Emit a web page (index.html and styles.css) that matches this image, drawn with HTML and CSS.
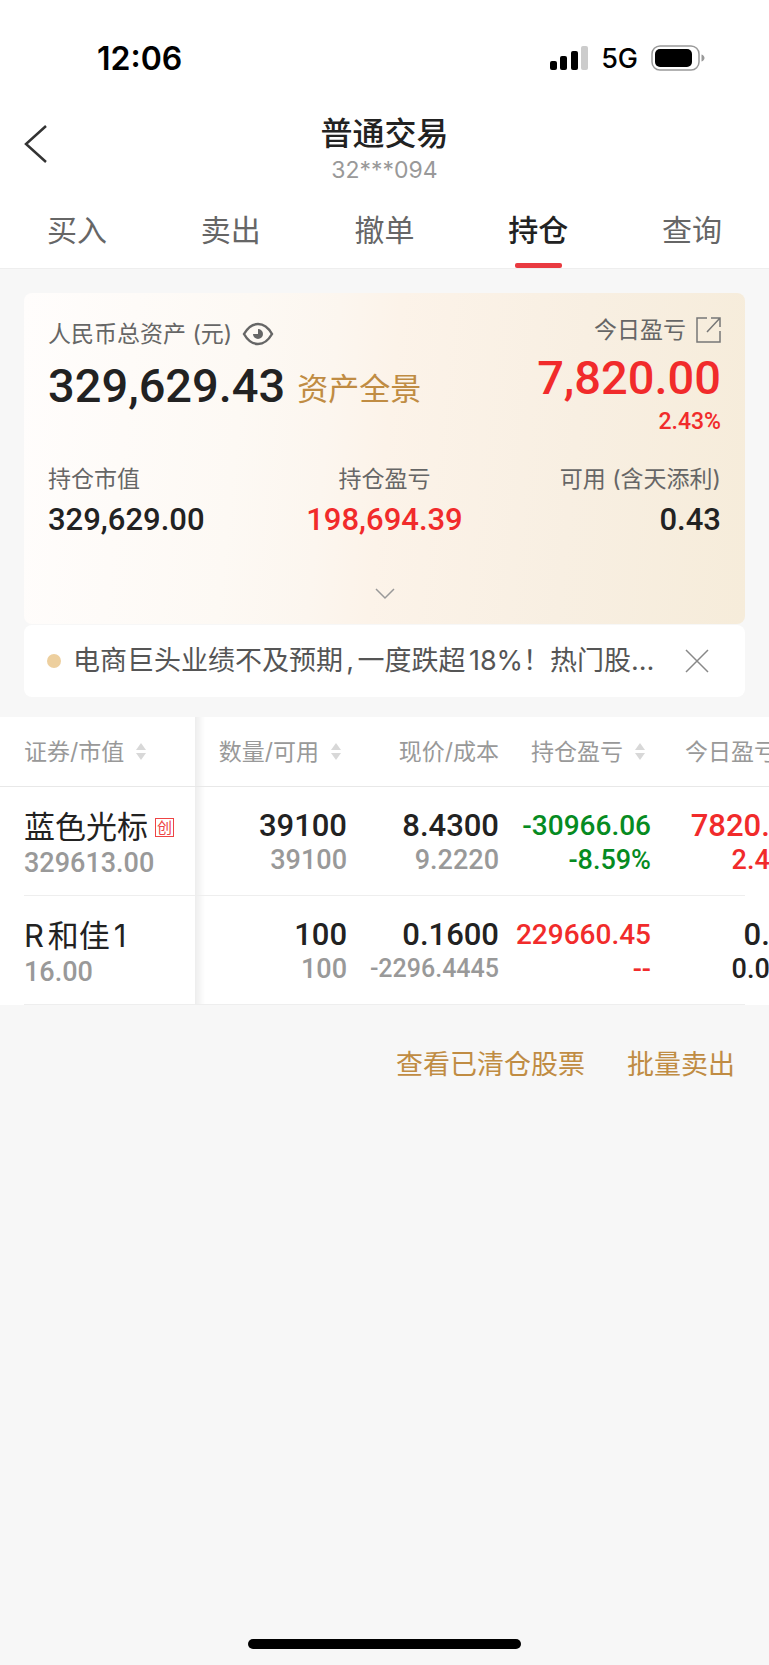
FILE: index.html
```html
<!DOCTYPE html>
<html lang="zh-CN">
<head>
    <meta charset="UTF-8">
    <meta name="viewport" content="width=device-width, initial-scale=1">
    <title>普通交易 - 持仓</title>
    <link rel="stylesheet" href="styles.css">
</head>
<body>
    <header class="header">
        <div class="status-bar">
            <span class="time">12:06</span>
            <div class="status-icons">
                <svg class="signal" width="38" height="24" viewBox="0 0 38 24">
                    <rect x="0" y="15" width="7" height="9" rx="2"/>
                    <rect x="10" y="10" width="7" height="14" rx="2"/>
                    <rect x="21" y="5" width="7" height="19" rx="2"/>
                    <rect x="31" y="0" width="7" height="24" rx="2" fill="#ccc"/>
                </svg>
                <span class="network">5G</span>
                <svg class="battery" width="54" height="26" viewBox="0 0 54 26">
                    <rect x="1" y="1" width="47" height="24" rx="8" fill="none" stroke="#999" stroke-width="1.5"/>
                    <rect x="4" y="4" width="37" height="18" rx="5"/>
                    <path d="M50.5 9.5c2 .6 3 2 3 3.500s-1 2.900-3 3.500z" fill="#999"/>
                </svg>
            </div>
        </div>

        <div class="title-bar">
            <button type="button" class="back" aria-label="返回">
                <svg width="24" height="40" viewBox="0 0 24 40">
                    <path d="M22 2L2 20l20 18" fill="none" stroke="#333" stroke-width="2.5"/>
                </svg>
            </button>
            <h1>普通交易</h1>
            <p class="account">32***094</p>
        </div>

        <nav class="tabs">
            <a href="#buy">买入</a>
            <a href="#sell">卖出</a>
            <a href="#cancel">撤单</a>
            <a href="#position" class="active">持仓</a>
            <a href="#query">查询</a>
        </nav>
    </header>

    <main>
        <section class="asset-card">
            <div class="asset-top">
                <div class="asset-total">
                    <div class="label">
                        <span>人民币总资产 (元)</span>
                        <button type="button" class="eye" aria-label="隐藏金额">
                            <svg width="32" height="24" viewBox="0 0 32 24">
                                <path d="M2 12C6 5 11 2 16 2s10 3 14 10c-4 7-9 10-14 10S6 19 2 12z" fill="none" stroke="#666" stroke-width="2.5"/>
                                <path d="M16 7a5 5 0 1 1-5 5h5z" fill="#666"/>
                            </svg>
                        </button>
                    </div>
                    <div class="total-line">
                        <span class="big">329,629.43</span>
                        <a href="#overview" class="gold">资产全景</a>
                    </div>
                </div>
                <div class="asset-today">
                    <div class="label">
                        <span>今日盈亏</span>
                        <a href="#today" class="share" aria-label="今日盈亏详情">
                            <svg width="25" height="26" viewBox="0 0 25 26" fill="none" stroke="#777" stroke-width="1.500">
                                <path d="M11 1H1v24h23V14M15 1h9v9M24 1L11 15"/>
                            </svg>
                        </a>
                    </div>
                    <div class="big red">7,820.00</div>
                    <div class="percent red">2.43%</div>
                </div>
            </div>

            <dl class="stats">
                <div>
                    <dt>持仓市值</dt>
                    <dd>329,629.00</dd>
                </div>
                <div>
                    <dt>持仓盈亏</dt>
                    <dd class="red">198,694.39</dd>
                </div>
                <div>
                    <dt>可用 (含天添利)</dt>
                    <dd>0.43</dd>
                </div>
            </dl>

            <button type="button" class="expand" aria-label="展开">
                <svg width="20" height="12" viewBox="0 0 20 12">
                    <path d="M1 1l9 9 9-9" fill="none" stroke="#999" stroke-width="1.500"/>
                </svg>
            </button>
        </section>

        <section class="notice">
            <span class="dot"></span>
            <a href="#news">电商巨头业绩不及预期,一度跌超18%！热门股…</a>
            <button type="button" class="close" aria-label="关闭">
                <svg width="24" height="24" viewBox="0 0 24 24">
                    <path d="M1 1l22 22M23 1L1 23" fill="none" stroke="#888" stroke-width="1.500"/>
                </svg>
            </button>
        </section>

        <div class="table-scroll">
            <table class="positions">
                <colgroup>
                    <col class="col-name">
                    <col class="col-amount">
                    <col class="col-price">
                    <col class="col-profit">
                    <col class="col-today">
                </colgroup>
                <thead>
                    <tr>
                        <th scope="col"><button type="button">证券/市值<i class="sort"></i></button></th>
                        <th scope="col"><button type="button">数量/可用<i class="sort"></i></button></th>
                        <th scope="col">现价/成本</th>
                        <th scope="col"><button type="button">持仓盈亏<i class="sort"></i></button></th>
                        <th scope="col"><button type="button">今日盈亏<i class="sort"></i></button></th>
                    </tr>
                </thead>
                <tbody>
                    <tr>
                        <td>
                            <div class="name">蓝色光标<span class="tag">创</span></div>
                            <div class="sub">329613.00</div>
                        </td>
                        <td>
                            <div class="value">39100</div>
                            <div class="sub">39100</div>
                        </td>
                        <td>
                            <div class="value">8.4300</div>
                            <div class="sub">9.2220</div>
                        </td>
                        <td class="green">
                            <div class="profit">-30966.06</div>
                            <div class="rate">-8.59%</div>
                        </td>
                        <td class="red">
                            <div class="value">7820.00</div>
                            <div class="rate">2.43%</div>
                        </td>
                    </tr>
                    <tr>
                        <td>
                            <div class="name">R和佳1</div>
                            <div class="sub">16.00</div>
                        </td>
                        <td>
                            <div class="value">100</div>
                            <div class="sub">100</div>
                        </td>
                        <td>
                            <div class="value">0.1600</div>
                            <div class="sub long">-2296.4445</div>
                        </td>
                        <td class="red">
                            <div class="profit">229660.45</div>
                            <div class="rate">--</div>
                        </td>
                        <td>
                            <div class="value">0.00</div>
                            <div class="rate">0.00%</div>
                        </td>
                    </tr>
                </tbody>
            </table>
        </div>

        <div class="links">
            <a href="#cleared">查看已清仓股票</a>
            <a href="#batch-sell">批量卖出</a>
        </div>
    </main>

    <div class="home-indicator"></div>
</body>
</html>
```

FILE: styles.css
```css
* {
    box-sizing: border-box;
}

body {
    margin: 0;
    min-height: 100vh;
    display: flex;
    flex-direction: column;
    font-family: Inter, "Noto Sans CJK SC", sans-serif;
    background: #f7f7f7;
    color: #222;
    overflow-x: hidden;
}

h1, p, dl, dd {
    margin: 0;
}

a {
    color: inherit;
    text-decoration: none;
}

button {
    padding: 0;
    border: none;
    background: none;
    font: inherit;
    color: inherit;
    cursor: pointer;
}

svg {
    display: block;
}

.red {
    color: #f12b2b;
}

.green {
    color: #068b22;
}

/* header */
.header {
    background: #fff;
    border-bottom: 1px solid #eee;
}

.status-bar {
    height: 114px;
    padding: 2px 64px 0 97px;
    display: flex;
    align-items: center;
    justify-content: space-between;
    color: #000;
}

.time {
    font-size: 32px;
    font-weight: 600;
}

.status-icons {
    display: flex;
    align-items: center;
    gap: 13px;
}

.network {
    font-size: 27px;
    font-weight: 500;
}

.title-bar {
    position: relative;
    height: 78px;
    text-align: center;
}

.back {
    position: absolute;
    left: 24px;
    top: 10px;
}

h1 {
    font-size: 32px;
    line-height: 40px;
    font-weight: 500;
}

.account {
    font-size: 23px;
    line-height: 32px;
    color: #999;
}

.tabs {
    display: flex;
}

.tabs a {
    position: relative;
    flex: 1;
    text-align: center;
    font-size: 30px;
    line-height: 76px;
    color: #666;
}

.tabs .active {
    color: #222;
    font-weight: 500;
}

.tabs .active::after {
    content: "";
    position: absolute;
    left: 50%;
    bottom: 0;
    width: 47px;
    height: 5px;
    margin-left: -23px;
    border-radius: 2px;
    background: #e93a40;
}

/* asset card */
.asset-card {
    margin: 24px 24px 0;
    padding: 23px 24px 0;
    border-radius: 8px;
    background: linear-gradient(96deg, #fffdfc, #fdf9f4 30%, #fcf6ef 42%, #fcf3e9 50%, #f8efe2 75%, #f6ecda);
}

.asset-top {
    display: flex;
    justify-content: space-between;
}

.asset-total {
    padding-top: 4px;
}

.asset-today {
    text-align: right;
}

.label {
    display: flex;
    align-items: center;
    gap: 10px;
    margin-bottom: 10px;
    font-size: 23px;
    line-height: 28px;
    color: #666;
}

.asset-today .label {
    justify-content: flex-end;
}

.total-line {
    display: flex;
    align-items: center;
    gap: 12px;
    height: 56px;
}

.gold {
    font-size: 31px;
    color: #c08c43;
}

.big {
    font-family: Roboto, sans-serif;
    font-size: 47px;
    line-height: 48px;
    font-weight: 500;
}

.percent {
    margin-top: 8px;
    font-family: Roboto, sans-serif;
    font-size: 23px;
    line-height: 24px;
    font-weight: 500;
}

.stats {
    display: grid;
    grid-template-columns: 1fr 1fr 1fr;
    margin-top: 31px;
    text-align: center;
}

.stats div:first-child {
    text-align: left;
}

.stats div:last-child {
    text-align: right;
}

.stats dt {
    font-size: 23px;
    line-height: 28px;
    color: #666;
}

.stats dd {
    margin-top: 9px;
    font-family: Roboto, sans-serif;
    font-size: 31px;
    line-height: 36px;
    font-weight: 500;
}

.expand {
    display: flex;
    align-items: center;
    justify-content: center;
    width: 100%;
    height: 60px;
    margin-top: 26px;
}

/* notice */
.notice {
    display: flex;
    align-items: center;
    height: 72px;
    margin: 1px 24px 0;
    padding: 0 36px 0 23px;
    border-radius: 8px;
    background: #fff;
    color: #555;
}

.notice a {
    flex: 1;
    min-width: 0;
    font-size: 27px;
    line-height: 36px;
    white-space: nowrap;
    overflow: hidden;
    text-autospace: normal;
}

.dot {
    width: 14px;
    height: 14px;
    margin-right: 12px;
    border-radius: 50%;
    background: #edcf9e;
}

/* positions table */
.table-scroll {
    margin-top: 20px;
    overflow: hidden;
    background: #fff;
}

.positions {
    width: 829px;
    table-layout: fixed;
    border-collapse: separate;
    border-spacing: 0;
    text-align: right;
}

.col-name {
    width: 195px;
}

.col-amount,
.col-price,
.col-profit {
    width: 152px;
}

.col-today {
    width: 178px;
}

.positions th {
    height: 70px;
    padding: 0;
    border-bottom: 1px solid #e8e8e8;
    font-size: 23px;
    line-height: 28px;
    font-weight: 400;
    color: #999;
    white-space: nowrap;
}

.positions th button {
    display: inline-flex;
    align-items: center;
    gap: 12px;
    padding-right: 6px;
    vertical-align: top;
}

.positions td {
    height: 109px;
    padding: 22px 0 0;
    vertical-align: top;
    font-family: Roboto, sans-serif;
    font-size: 27px;
    line-height: 34px;
    font-weight: 500;
}

.positions th:last-child,
.positions td:last-child {
    padding-right: 24px;
}

.positions th:first-child,
.positions td:first-child {
    position: sticky;
    left: 0;
    z-index: 1;
    padding-left: 24px;
    text-align: left;
    background: #fff;
}

.positions td:first-child {
    line-height: 36px;
}

/* shadow on the edge of the fixed column */
.positions th:first-child::after,
.positions td:first-child::after {
    content: "";
    position: absolute;
    top: 0;
    bottom: 0;
    left: 100%;
    width: 10px;
    background: linear-gradient(90deg, rgba(0, 0, 0, 0.07), transparent);
}

.positions tbody tr {
    position: relative;
}

.positions tbody tr::after {
    content: "";
    position: absolute;
    left: 24px;
    bottom: 0;
    z-index: 2;
    width: calc(100vw - 48px);
    height: 1px;
    background: #eee;
}

.name {
    display: flex;
    align-items: center;
    gap: 7px;
    font-family: Inter, "Noto Sans CJK SC", sans-serif;
    font-size: 31px;
    font-weight: 400;
    text-autospace: normal;
}

.tag {
    width: 19px;
    height: 19px;
    border: 1px solid #ee4444;
    font-size: 15px;
    line-height: 17px;
    text-align: center;
    color: #ee4444;
}

.value {
    font-size: 31px;
}

.profit {
    font-size: 28px;
}

.sub {
    color: #999;
}

.long {
    font-size: 25px;
}

.sort {
    display: flex;
    flex-direction: column;
    gap: 3px;
}

.sort::before,
.sort::after {
    content: "";
    border: 5px solid transparent;
}

.sort::before {
    border-top: none;
    border-bottom: 7px solid #d8d8d8;
}

.sort::after {
    border-bottom: none;
    border-top: 7px solid #d8d8d8;
}

/* bottom links */
.links {
    display: flex;
    justify-content: flex-end;
    gap: 42px;
    padding: 42px 34px 0 24px;
    font-size: 27px;
    line-height: 36px;
    color: #c08c43;
}

.home-indicator {
    width: 273px;
    height: 10px;
    margin: auto auto 16px;
    border-radius: 5px;
    background: #000;
}
```
